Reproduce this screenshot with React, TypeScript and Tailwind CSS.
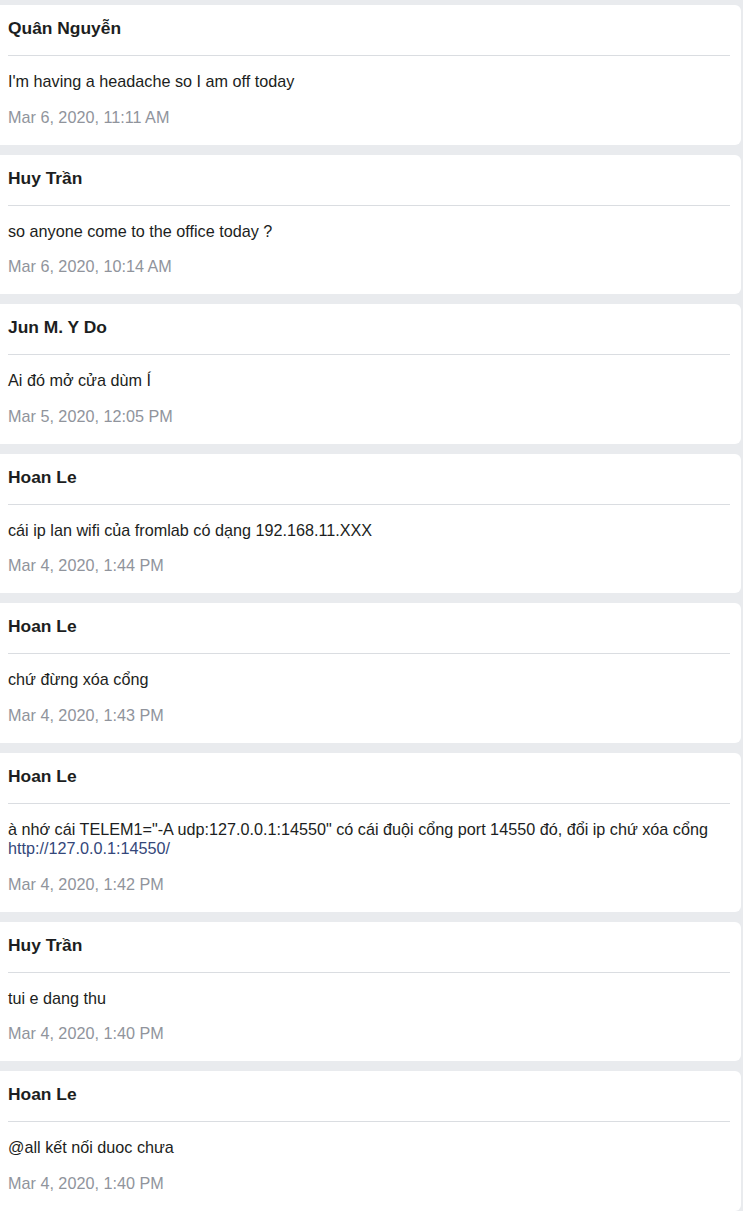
import React from "react";

type Post = {
  author: string;
  lines: React.ReactNode;
  time: string;
};

const posts: Post[] = [
  { author: "Quân Nguyễn", lines: "I'm having a headache so I am off today", time: "Mar 6, 2020, 11:11 AM" },
  { author: "Huy Trần", lines: "so anyone come to the office today ?", time: "Mar 6, 2020, 10:14 AM" },
  { author: "Jun M. Y Do", lines: "Ai đó mở cửa dùm Í", time: "Mar 5, 2020, 12:05 PM" },
  { author: "Hoan Le", lines: "cái ip lan wifi của fromlab có dạng 192.168.11.XXX", time: "Mar 4, 2020, 1:44 PM" },
  { author: "Hoan Le", lines: "chứ đừng xóa cổng", time: "Mar 4, 2020, 1:43 PM" },
  {
    author: "Hoan Le",
    lines: (
      <>
        à nhớ cái TELEM1="-A udp:127.0.0.1:14550" có cái đuội cổng port 14550 đó, đổi ip chứ xóa cổng
        <br />
        <a href="#" className="text-[#34477a]">http://127.0.0.1:14550/</a>
      </>
    ),
    time: "Mar 4, 2020, 1:42 PM",
  },
  { author: "Huy Trần", lines: "tui e dang thu", time: "Mar 4, 2020, 1:40 PM" },
  { author: "Hoan Le", lines: "@all kết nối duoc chưa", time: "Mar 4, 2020, 1:40 PM" },
];

function PostCard({ post }: { post: Post }) {
  return (
    <div className="mb-[10px] w-[741px] rounded-r-[6px] bg-white pl-2 pr-[11px]">
      <div className="border-b border-[#dadde1] pt-[13px] pb-[17px] text-[17.4px] font-bold leading-5 text-[#1c1e21]">
        {post.author}
      </div>
      <div className="pt-4 pb-[18px]">
        <div className="text-[16.2px] leading-[19.5px] text-[#1c1e21]">{post.lines}</div>
        <div className="mt-[15px] text-[16.2px] leading-5 text-[#90949c]">{post.time}</div>
      </div>
    </div>
  );
}

export default function App() {
  return (
    <div
      className="min-h-[1211px] bg-[#e9ebee] pt-[5px]"
      style={{ fontFamily: '"Liberation Sans", Arial, sans-serif' }}
    >
      {posts.map((p, i) => (
        <PostCard key={i} post={p} />
      ))}
    </div>
  );
}
